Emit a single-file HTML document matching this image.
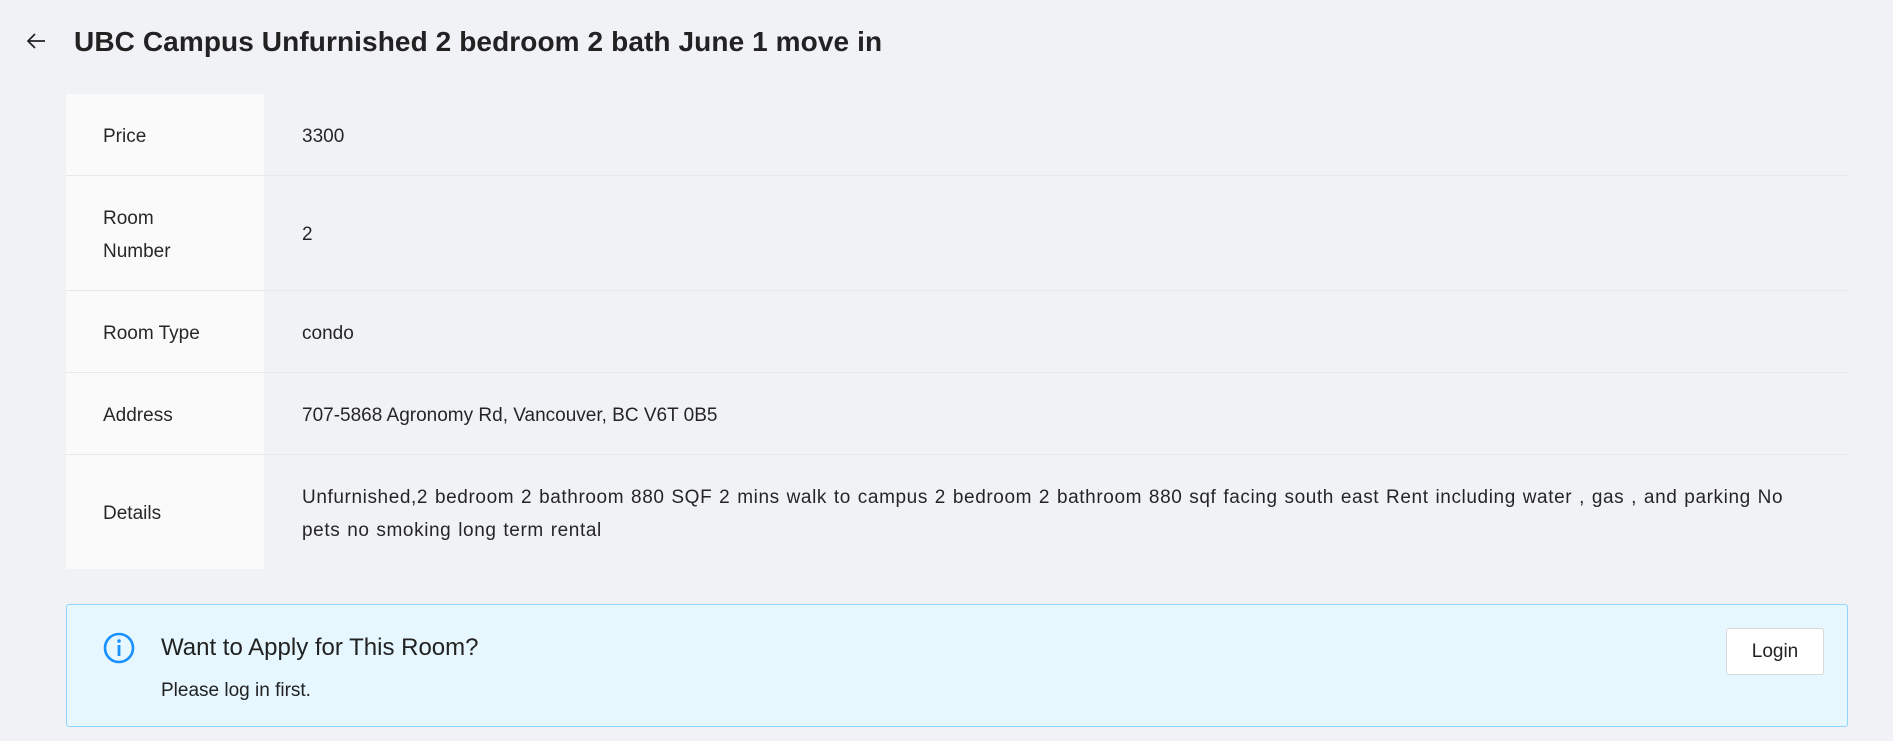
<!DOCTYPE html>
<html><head><meta charset="utf-8"><style>
*{margin:0;padding:0;box-sizing:border-box}
body{width:1893px;height:741px;background:#f0f2f5;font-family:"Liberation Sans",sans-serif;color:rgba(0,0,0,.85);position:relative;overflow:hidden}
.title{position:absolute;left:74px;top:26px;font-size:28px;font-weight:bold;color:#222;letter-spacing:0.1px}
.arrow{position:absolute;left:24px;top:29px}
table{position:absolute;left:66px;top:94px;width:1782px;border-collapse:collapse;font-size:19px}
td{border-bottom:1px solid #e8e8e8;vertical-align:middle}
td.l{width:198px;background:#fafafa;padding-left:37px;line-height:33px;padding-top:4px}
td.v{padding-left:38px;line-height:33px;padding-top:4px}
.alert{position:absolute;left:66px;top:604px;width:1782px;height:123px;background:#e6f7ff;border:1px solid #91d5ff;border-radius:3px}
.at{position:absolute;left:94px;top:29px;font-size:24px;color:#222}
.ad{position:absolute;left:94px;top:75px;font-size:19px;color:#222}
.btn{position:absolute;left:1659px;top:23px;width:98px;height:47px;background:#fff;border:1px solid #d9d9d9;border-radius:3px;font-size:19px;text-align:center;line-height:45px;color:#222}
</style></head><body>
<svg class="arrow" width="24" height="24" viewBox="0 0 24 24"><path d="M21 12H4M11 5l-7 7 7 7" fill="none" stroke="#222" stroke-width="1.7"/></svg>
<div class="title">UBC Campus Unfurnished 2 bedroom 2 bath June 1 move in</div>
<table>
<tr style="height:81px"><td class="l">Price</td><td class="v">3300</td></tr>
<tr style="height:115px"><td class="l">Room<br>Number</td><td class="v">2</td></tr>
<tr style="height:82px"><td class="l">Room Type</td><td class="v">condo</td></tr>
<tr style="height:82px"><td class="l">Address</td><td class="v">707-5868 Agronomy Rd, Vancouver, BC V6T 0B5</td></tr>
<tr style="height:115px"><td class="l" style="border-bottom:none">Details</td><td class="v" style="border-bottom:none;letter-spacing:0.6px;word-spacing:1px">Unfurnished,2 bedroom 2 bathroom 880 SQF 2 mins walk to campus 2 bedroom 2 bathroom 880 sqf facing south east Rent including water , gas , and parking No<br>pets no smoking long term rental</td></tr>
</table>
<div class="alert">
<svg style="position:absolute;left:36px;top:27px" width="32" height="32" viewBox="0 0 32 32"><circle cx="16" cy="16" r="14" fill="none" stroke="#1890ff" stroke-width="2.6"/><rect x="14.6" y="13" width="2.8" height="11" fill="#1890ff"/><circle cx="16" cy="9" r="1.8" fill="#1890ff"/></svg>
<div class="at">Want to Apply for This Room?</div>
<div class="ad">Please log in first.</div>
<div class="btn">Login</div>
</div>
</body></html>
